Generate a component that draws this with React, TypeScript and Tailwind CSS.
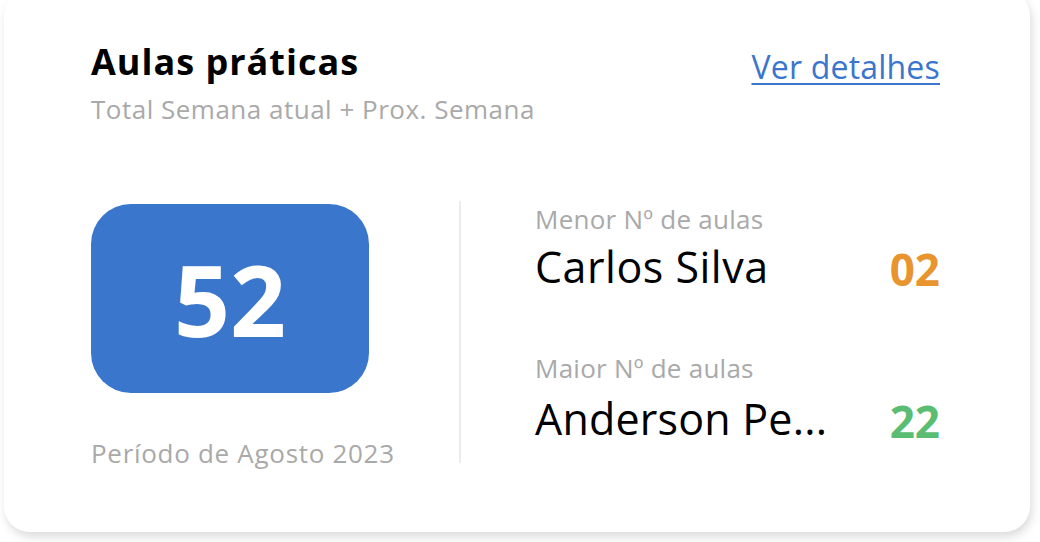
import React from "react";

export default function App() {
  const font = { fontFamily: "'Open Sans', 'Noto Sans', sans-serif" };
  return (
    <div className="w-[1040px] h-[542px] bg-white overflow-hidden" style={font}>
      <div className="ml-[4px] mt-[-10px] w-[1026px] h-[542px] rounded-[26px] bg-white shadow-[2px_5px_10px_rgba(0,0,0,0.14)] pt-[50px] pl-[87px] pr-[90px]">
        <div className="flex justify-between items-start">
          <div>
            <div className="text-[36px] font-bold leading-[44px] tracking-[1px] text-black">Aulas práticas</div>
            <div className="text-[26px] leading-[32px] tracking-[0.5px] text-[#a9a9a9] mt-[9px]">Total Semana atual + Prox. Semana</div>
          </div>
          <a className="text-[32px] leading-[40px] tracking-[0.2px] text-[#3a76cc] underline underline-offset-[4px] decoration-[2px] mt-[7px]">Ver detalhes</a>
        </div>
        <div className="flex mt-[76px]">
          <div className="w-[368px] flex flex-col">
            <div className="mt-[3px] w-[278px] h-[189px] rounded-[40px] bg-[#3a76cc] flex items-center justify-center text-white font-bold text-[98px] leading-none">52</div>
            <div className="mt-[44px] text-[26px] leading-[32px] tracking-[0.7px] text-[#a9a9a9]">Período de Agosto 2023</div>
          </div>
          <div className="w-[2px] h-[262px] bg-[#ebebeb]"></div>
          <div className="flex-1 pl-[74px] flex flex-col">
            <div className="mt-[2px] text-[26px] leading-[32px] tracking-[0.25px] text-[#a9a9a9]">Menor Nº de aulas</div>
            <div className="mt-[5px] flex justify-between items-baseline">
              <div className="text-[43px] leading-[52px] tracking-[0.5px] text-black">Carlos Silva</div>
              <div className="relative top-[3px] text-[44px] leading-[52px] font-bold text-[#e8952f]">02</div>
            </div>
            <div className="mt-[59px] text-[26px] leading-[32px] tracking-[0.25px] text-[#a9a9a9]">Maior Nº de aulas</div>
            <div className="mt-[8px] flex justify-between items-baseline">
              <div className="text-[43px] leading-[52px] tracking-[0.2px] text-black">Anderson Pe...</div>
              <div className="relative top-[3px] text-[44px] leading-[52px] font-bold text-[#5bbd74]">22</div>
            </div>
          </div>
        </div>
      </div>
    </div>
  );
}
